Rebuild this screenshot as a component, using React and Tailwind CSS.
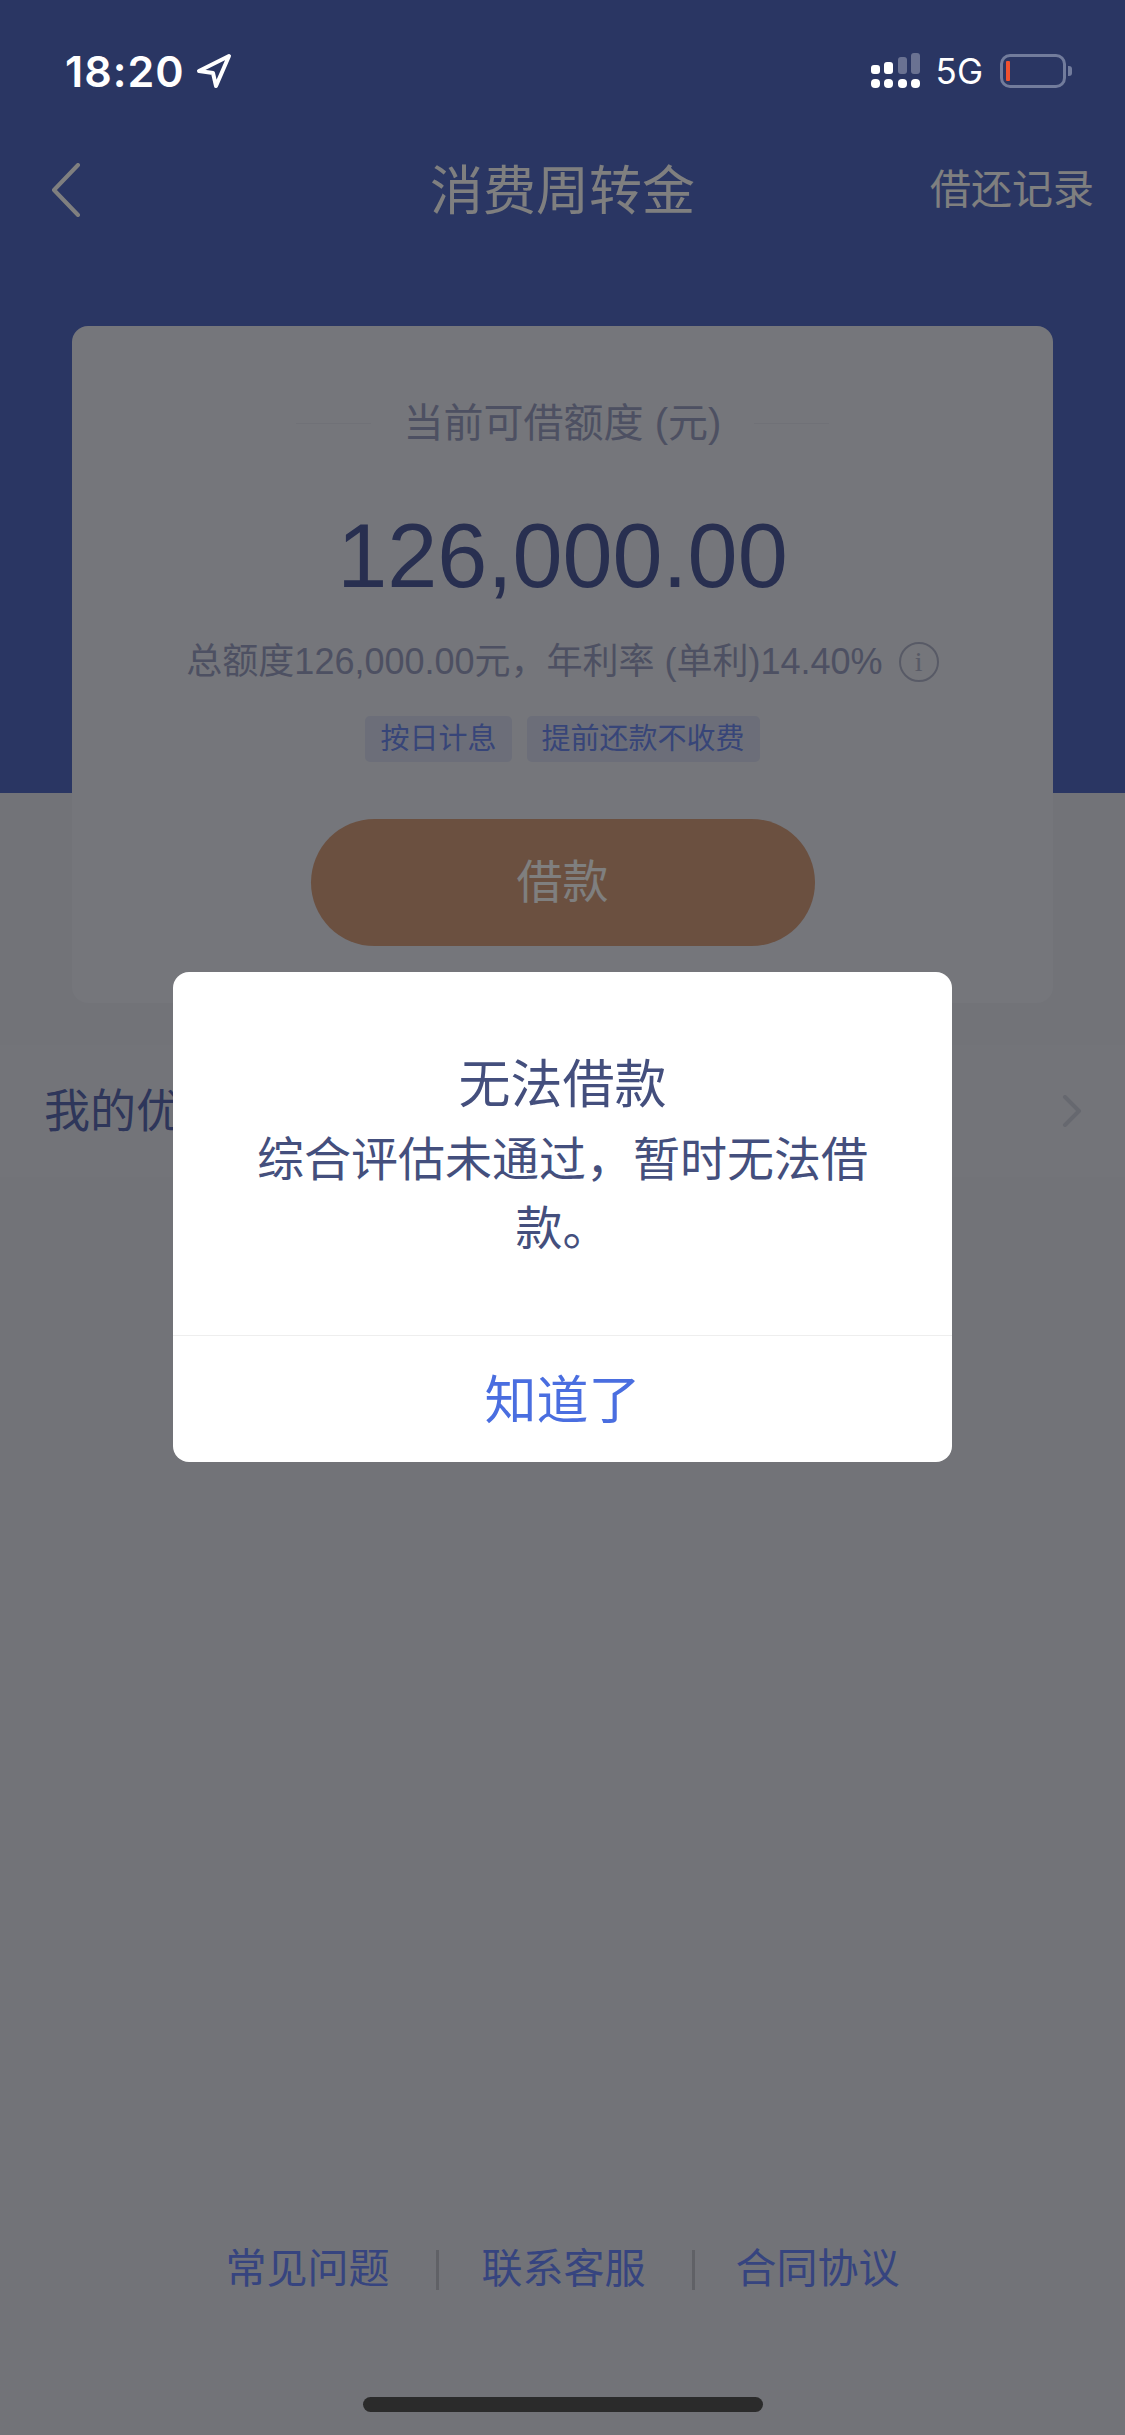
const cjk = { fontFamily: '"Liberation Sans", "Noto Sans CJK SC", sans-serif' };

const StatusBar = () => (
    <div className="relative z-20 flex h-[54px] items-center pl-[65px] pr-[53px] text-white">
        <span className="font-['Inter'] text-[43px] leading-none font-semibold tracking-[1px]">18:20</span>
        <svg className="ml-[11px]" width="36" height="36" viewBox="0 0 36 36" fill="none">
            <path d="M33 3 L3 18 L17 20 L20 33 Z" stroke="#fff" strokeWidth="4" strokeLinejoin="round" />
        </svg>

        <div className="ml-auto flex items-center">
            <svg width="50" height="36" viewBox="0 0 50 36" fill="#fff">
                <rect x="0" y="12" width="9" height="9" rx="3" />
                <rect x="13" y="9" width="9" height="12" rx="3" />
                <rect x="27" y="4" width="9" height="17" rx="3" opacity="0.3" />
                <rect x="40" y="0" width="9" height="21" rx="3" opacity="0.3" />
                <rect x="0" y="26" width="9" height="9" rx="4" />
                <rect x="13" y="26" width="9" height="9" rx="4" />
                <rect x="27" y="26" width="9" height="9" rx="4" />
                <rect x="40" y="26" width="9" height="9" rx="4" />
            </svg>
            <span className="ml-[15px] font-['Inter'] text-[35px] leading-none">5G</span>
            <div className="ml-[17px] flex h-[34px] w-[66px] items-center rounded-[10px] border-[3px] border-[#727c9c] pl-[3px]">
                <div className="h-[20px] w-[4px] rounded-[1px] bg-[#f0512f]" />
            </div>
            <div className="ml-[2px] h-[10px] w-[4px] rounded-r-[3px] bg-[#727c9c]" />
        </div>
    </div>
);

const NavBar = () => (
    <div className="relative mt-[61px] flex h-[64px] items-center justify-center text-white">
        <svg className="absolute left-[50px] top-[4px]" width="32" height="54" viewBox="0 0 32 54" fill="none">
            <path d="M28 2 L4 27 L28 52" stroke="currentColor" strokeWidth="4" strokeLinecap="round" strokeLinejoin="round" />
        </svg>
        <span className="text-[53px] leading-none">消费周转金</span>
        <span className="absolute right-[31px] top-[11px] text-[41px] leading-none">借还记录</span>
    </div>
);

const Card = () => (
    <div className="relative z-0 mx-[72px] mt-[103px] -mb-[210px] flex h-[677px] flex-col items-center rounded-[16px] bg-[#eaecf6]">
        <div className="mt-[77px] flex items-center">
            <div className="h-[1px] w-[75px] bg-[#e0e2ee]" />
            <span className="mx-[33px] text-[40px] leading-none text-[#9aa1c4]">当前可借额度 (元)</span>
            <div className="h-[1px] w-[75px] bg-[#e0e2ee]" />
        </div>
        <div className="mt-[68px] text-[90px] leading-none text-[#505ea0]">126,000.00</div>
        <div className="mt-[41px] flex items-center">
            <span className="text-[36px] leading-none whitespace-nowrap text-[#9aa1c4]">总额度126,000.00元&#xFF0C;年利率 (单利)14.40%</span>
            <div className="ml-[16px] flex h-[40px] w-[40px] items-center justify-center rounded-full border-[2px] border-[#b0b5cc] font-['Liberation_Serif'] text-[28px] leading-none text-[#b0b5cc]">
                i
            </div>
        </div>
        <div className="mt-[34px] flex gap-[15px]">
            <span className="rounded-[5px] bg-[#d8ddf2] px-[15px] py-[8px] text-[29px] leading-[30px] text-[#6f8af0]">按日计息</span>
            <span className="rounded-[5px] bg-[#d8ddf2] px-[15px] py-[8px] text-[29px] leading-[30px] text-[#6f8af0]">提前还款不收费</span>
        </div>
        <button className="mt-[57px] flex h-[127px] w-[504px] items-center justify-center rounded-full bg-[#d6a080] text-[46px] text-white">
            借款
        </button>
    </div>
);

const Dialog = () => (
    <div className="absolute inset-0 z-10 flex flex-col items-center bg-black/50 pt-[972px]">
        <div className="flex h-[490px] w-[779px] flex-col rounded-[16px] bg-white">
            <div className="flex flex-1 flex-col items-center px-[80px] pt-[83px] text-center text-[#444f7d]">
                <div className="text-[52px] leading-[60px]">无法借款</div>
                <div className="mt-[10px] text-[47px] leading-[69px]">综合评估未通过&#xFF0C;暂时无法借款。</div>
            </div>
            <div className="flex h-[127px] items-center justify-center border-t border-[#eeeeee] pt-[3px] text-[52px] text-[#4a6ee0]">
                知道了
            </div>
        </div>
    </div>
);

const Footer = () => (
    <div className="mt-auto flex flex-col items-center">
        <div className="flex items-center text-[41px] leading-none text-[#6c88fe]">
            <span>常见问题</span>
            <div className="mr-[43px] ml-[46px] h-[40px] w-[3px] bg-[#c0c2cc]" />
            <span>联系客服</span>
            <div className="mr-[41px] ml-[46px] h-[40px] w-[3px] bg-[#c0c2cc]" />
            <span>合同协议</span>
        </div>
        <div className="mt-[107px] mb-[23px] h-[15px] w-[400px] rounded-full bg-[#565656]" />
    </div>
);

export default function App() {
    return (
        <div className="relative flex h-[2435px] w-[1125px] flex-col overflow-hidden bg-[#e4e6f0]" style={cjk}>
            <div className="bg-[#546cc6] pt-[44px]">
                <StatusBar />
                <NavBar />
                <Card />
            </div>

            <div className="mt-[252px] flex h-[132px] items-center justify-between bg-[#e6e8f2] pl-[44px] pr-[43px]">
                <span className="text-[46px] leading-none text-[#5c6cb4]">我的优惠券</span>
                <svg width="20" height="32" viewBox="0 0 20 32" fill="none">
                    <path d="M3 2 L17 16 L3 30" stroke="#ccd0de" strokeWidth="4" strokeLinecap="round" strokeLinejoin="round" />
                </svg>
            </div>

            <Footer />
            <Dialog />
        </div>
    );
}
